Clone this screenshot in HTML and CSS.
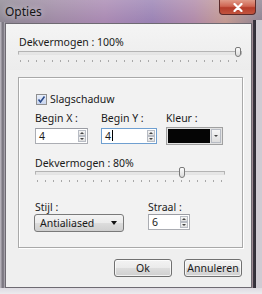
FILE: index.html
```html
<!DOCTYPE html>
<html>
<head>
<meta charset="utf-8">
<link rel="stylesheet" href="styles.css">
</head>
<body>
<div class="window">
  <div class="titlebar">
    <span class="title">Opties</span>
    <div class="close">
      <svg width="10" height="9" viewBox="0 0 10 9"><path d="M1.5 1 L8.5 8 M8.5 1 L1.5 8" stroke="#fff" stroke-width="2.2" stroke-linecap="round"/></svg>
    </div>
  </div>
  <div class="client">
    <div class="top">
      <div class="label">Dekvermogen : 100%</div>
      <div class="slider wide">
        <div class="track"></div>
        <div class="thumb" style="left:217px"></div>
        <div class="ticks"></div>
      </div>
    </div>
    <div class="panel">
      <div class="check">
        <span class="box"><svg width="9" height="9" viewBox="0 0 9 9"><path d="M1.5 4.5 L3.5 7 L7.5 1.5" fill="none" stroke="#2a4a8a" stroke-width="1.6"/></svg></span>
        <span>Slagschaduw</span>
      </div>
      <div class="row r1">
        <div class="field fx">
          <div class="label">Begin X :</div>
          <div class="spin"><span class="val">4</span><span class="arrows"><i class="up"></i><i class="down"></i></span></div>
        </div>
        <div class="field fy">
          <div class="label">Begin Y :</div>
          <div class="spin focus"><span class="val">4<b class="caret"></b></span><span class="arrows"><i class="up"></i><i class="down"></i></span></div>
        </div>
        <div class="field fc">
          <div class="label">Kleur :</div>
          <div class="color"><span class="swatch"></span><span class="drop"><i class="down"></i></span></div>
        </div>
      </div>
      <div class="label l80">Dekvermogen : 80%</div>
      <div class="slider inner">
        <div class="track"></div>
        <div class="thumb" style="left:144px"></div>
        <div class="ticks"></div>
      </div>
      <div class="row r2">
        <div class="field fs">
          <div class="label">Stijl :</div>
          <div class="select"><span>Antialiased</span><span class="sarrow"></span></div>
        </div>
        <div class="field fr">
          <div class="label">Straal :</div>
          <div class="spin small"><span class="val">6</span><span class="arrows"><i class="up"></i><i class="down"></i></span></div>
        </div>
      </div>
    </div>
    <div class="buttons">
      <div class="btn ok">Ok</div>
      <div class="btn cancel">Annuleren</div>
    </div>
  </div>
</div>
</body>
</html>
```

FILE: styles.css
```css
* { box-sizing: border-box; }
html, body { margin: 0; padding: 0; }
body {
  width: 262px;
  height: 294px;
  overflow: hidden;
  font-family: "Noto Sans", "Open Sans", sans-serif;
  font-size: 10.5px;
  color: #1a1a1a;
  background: #d8d4dc;
}
.window {
  width: 262px;
  height: 294px;
  display: flex;
  flex-direction: column;
  background:
    linear-gradient(180deg, transparent 288px, #dedbe2 288px, #ecebee 294px),
    linear-gradient(90deg, transparent 253px, #3c3842 253px, #2e2a34 256px, #cfcbd3 256px) 0 20px / 100% 268px no-repeat,
    linear-gradient(90deg, #c4c0c8 0px, #6e6a74 3px, #b8b4bc 5px, transparent 5px) 0 22px / 100% 266px no-repeat,
    linear-gradient(180deg, rgba(255,255,255,0.18) 0px, rgba(255,255,255,0) 22px),
    linear-gradient(90deg, #8e8893 0%, #a08aa6 22%, #a989b2 40%, #9a82b4 58%, #b08aa9 74%, #c39a92 86%, #8f8494 100%);
}
.titlebar {
  height: 23px;
  flex: none;
  display: flex;
  align-items: flex-start;
  justify-content: space-between;
  padding: 0 6px 0 5px;
}
.title {
  margin-top: 4px;
  font-size: 12px;
  line-height: 15px;
  color: #141414;
  text-shadow: 0 0 6px rgba(255,255,255,0.7);
}
.close {
  width: 37px;
  height: 15px;
  border: 1px solid #5a2a2a;
  border-top: none;
  border-radius: 0 0 4px 4px;
  background: linear-gradient(180deg, #e09a88 0%, #cf6552 45%, #b53c2a 55%, #c2553f 100%);
  display: flex;
  align-items: center;
  justify-content: center;
}
.client {
  margin-left: 5px;
  width: 247px;
  height: 265px;
  border: 1px solid #6e6a72;
  background: #efefef;
  display: flex;
  flex-direction: column;
}
.top {
  background: linear-gradient(180deg, #f4f4f4, #ececec);
  padding: 11px 0 0 12px;
  height: 46px;
  flex: none;
}
.label {
  line-height: 14px;
  white-space: nowrap;
}
.top .label { margin-left: 1px; }
.slider {
  position: relative;
  height: 14px;
}
.slider .track {
  position: absolute;
  left: 0;
  right: 0;
  top: 4px;
  height: 4px;
  border: 1px solid #b4b4b4;
  border-bottom-color: #e4e4e4;
  background: #e6e6e6;
}
.slider .thumb {
  position: absolute;
  top: 0;
  width: 6px;
  height: 10px;
  border: 1px solid #7a7a7a;
  border-radius: 2px 2px 3px 3px;
  background: linear-gradient(180deg, #fbfbfb, #dcdcdc);
}
.slider .ticks {
  position: absolute;
  left: 2px;
  right: 2px;
  top: 13px;
  height: 2px;
  background: repeating-linear-gradient(90deg, #a8a8a8 0 1px, transparent 1px 8px);
}
.slider.wide { width: 224px; margin-top: -2px; }
.panel {
  margin: 7px 0 0 12px;
  width: 225px;
  height: 171px;
  flex: none;
  border: 1px solid #a9a9a9;
  box-shadow: inset 1px 1px 0 #fff, 1px 1px 0 #fff;
  background: #f2f2f2;
  padding: 15px 0 0 16px;
}
.check {
  display: flex;
  align-items: center;
  gap: 3px;
  height: 12px;
  line-height: 14px;
  margin-left: 1px;
}
.box {
  width: 11px;
  height: 11px;
  border: 1px solid #8f8f8f;
  background: linear-gradient(180deg, #e8eefa, #c9d6ef);
  display: flex;
  align-items: center;
  justify-content: center;
}
.row { display: flex; }
.r1 { margin-top: 6px; }
.field .label { margin-bottom: 3px; }
.fx { width: 66px; }
.fy { width: 65px; }
.spin {
  display: flex;
  justify-content: space-between;
  align-items: stretch;
  height: 16px;
  width: 53px;
  border: 1px solid #abadb3;
  border-top-color: #9a9ca3;
  background: #fff;
  padding: 1px 1px 1px 3px;
}
.fy .spin { width: 56px; }
.spin.focus { border-color: #6f9fd0; }
.val { line-height: 12px; position: relative; }
.caret {
  display: inline-block;
  width: 1px;
  height: 11px;
  background: #000;
  vertical-align: top;
  margin-left: 1px;
}
.arrows {
  display: flex;
  flex-direction: column;
  width: 8px;
}
.arrows i, .drop {
  flex: 1;
  display: flex;
  align-items: center;
  justify-content: center;
  border: 1px solid #b8bcc4;
  background: linear-gradient(180deg, #f6f6f6, #dedede);
}
.arrows i::before, .drop i::before, .sarrow::before {
  content: "";
  border-left: 2px solid transparent;
  border-right: 2px solid transparent;
}
.up::before { border-bottom: 2px solid #444; }
.down::before { border-top: 2px solid #444; }
.color {
  width: 57px;
  height: 18px;
  margin-top: -1px;
  display: flex;
  border: 1px solid #a0a0a0;
  background: #e2e2e2;
  padding: 1px;
  gap: 1px;
}
.swatch { flex: 1; background: #050505; }
.drop { flex: none; width: 10px; }
.drop i { display: flex; }
.l80 { margin-top: 11px; }
.slider.inner { width: 190px; margin-top: -3px; }
.slider.inner .thumb { height: 11px; }
.r2 { margin-top: 19px; }
.r2 .field .label { margin-bottom: 0; }
.fs { width: 113px; }
.select {
  width: 90px;
  height: 18px;
  margin-left: -1px;
  border: 1px solid #7a7a7a;
  border-radius: 3px;
  background: linear-gradient(180deg, #f4f4f4 0%, #ebebeb 48%, #dcdcdc 52%, #cfcfcf 100%);
  display: flex;
  align-items: center;
  justify-content: space-between;
  padding: 0 6px 0 5px;
}
.sarrow::before {
  display: block;
  border-left-width: 3px;
  border-right-width: 3px;
  border-top: 4px solid #111;
}
.spin.small { width: 42px; }
.buttons {
  display: flex;
  justify-content: flex-end;
  gap: 12px;
  margin-top: 11px;
  padding-right: 9px;
}
.btn {
  height: 18px;
  flex: none;
  border: 1px solid #707070;
  border-radius: 3px;
  background: linear-gradient(180deg, #f3f3f3 0%, #ebebeb 48%, #dddddd 52%, #cfcfcf 100%);
  box-shadow: inset 0 0 0 1px rgba(255,255,255,0.7);
  display: flex;
  align-items: center;
  justify-content: center;
}
.ok { width: 58px; }
.cancel { width: 58px; }
```
